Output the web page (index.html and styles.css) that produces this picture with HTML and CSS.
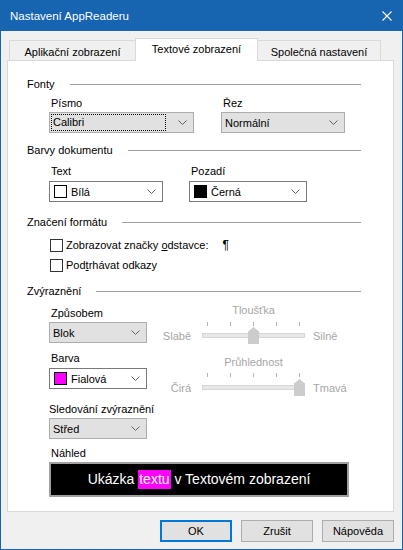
FILE: index.html
```html
<!DOCTYPE html>
<html lang="cs">
<head>
  <meta charset="UTF-8">
  <title>Nastavení AppReaderu</title>
  <link rel="stylesheet" href="styles.css">
</head>
<body>
  <div class="window">
    <div class="titlebar">
      <span class="title">Nastavení AppReaderu</span>
      <svg class="close" width="10" height="10" viewBox="0 0 10 10"><path d="M0.5 0.5 L9.5 9.5 M9.5 0.5 L0.5 9.5" stroke="#fff" stroke-width="1.1"/></svg>
    </div>

    <div class="content">
      <div class="tabs">
        <div class="tab first">Aplikační zobrazení</div>
        <div class="tab active">Textové zobrazení</div>
        <div class="tab">Společná nastavení</div>
      </div>

      <div class="panel">
        <div class="group-title"><span>Fonty</span><div class="line"></div></div>
        <div class="row fonts">
          <div class="field w-font">
            <div class="label">Písmo</div>
            <div class="combo grey">
              <div class="focus-rect">Calibri</div>
              <svg class="chev" width="9" height="5" viewBox="0 0 9 5"><path d="M0.5 0.5 L4.5 4.5 L8.5 0.5" fill="none" stroke="#606060"/></svg>
            </div>
          </div>
          <div class="field w-style">
            <div class="label">Řez</div>
            <div class="combo grey">
              <span class="value">Normální</span>
              <svg class="chev" width="9" height="5" viewBox="0 0 9 5"><path d="M0.5 0.5 L4.5 4.5 L8.5 0.5" fill="none" stroke="#606060"/></svg>
            </div>
          </div>
        </div>

        <div class="group-title gap-colors"><span>Barvy dokumentu</span><div class="line"></div></div>
        <div class="row colors">
          <div class="field w-text">
            <div class="label">Text</div>
            <div class="combo white">
              <span class="swatch white-sw"></span><span class="value">Bílá</span>
              <svg class="chev" width="9" height="5" viewBox="0 0 9 5"><path d="M0.5 0.5 L4.5 4.5 L8.5 0.5" fill="none" stroke="#606060"/></svg>
            </div>
          </div>
          <div class="field w-bg">
            <div class="label">Pozadí</div>
            <div class="combo white">
              <span class="swatch black-sw"></span><span class="value">Černá</span>
              <svg class="chev" width="9" height="5" viewBox="0 0 9 5"><path d="M0.5 0.5 L4.5 4.5 L8.5 0.5" fill="none" stroke="#606060"/></svg>
            </div>
          </div>
        </div>

        <div class="group-title gap-format"><span>Značení formátu</span><div class="line"></div></div>
        <div class="check first-check">
          <span class="box"></span>
          <span>Zobrazovat značky <u>o</u>dstavce:</span>
          <span class="pilcrow">¶</span>
        </div>
        <div class="check second-check">
          <span class="box"></span>
          <span>Pod<u>t</u>rhávat odkazy</span>
        </div>

        <div class="group-title gap-highlight"><span>Zvýraznění</span><div class="line"></div></div>
        <div class="highlight">
          <div class="left-col">
            <div class="label l-mode">Způsobem</div>
            <div class="combo grey">
              <span class="value">Blok</span>
              <svg class="chev" width="9" height="5" viewBox="0 0 9 5"><path d="M0.5 0.5 L4.5 4.5 L8.5 0.5" fill="none" stroke="#606060"/></svg>
            </div>
            <div class="label l-color">Barva</div>
            <div class="combo white c-color">
              <span class="swatch magenta-sw"></span><span class="value">Fialová</span>
              <svg class="chev" width="9" height="5" viewBox="0 0 9 5"><path d="M0.5 0.5 L4.5 4.5 L8.5 0.5" fill="none" stroke="#606060"/></svg>
            </div>
            <div class="label l-follow">Sledování zvýraznění</div>
            <div class="combo grey">
              <span class="value">Střed</span>
              <svg class="chev" width="9" height="5" viewBox="0 0 9 5"><path d="M0.5 0.5 L4.5 4.5 L8.5 0.5" fill="none" stroke="#606060"/></svg>
            </div>
          </div>

          <div class="right-col">
            <div class="slider s-weight">
              <div class="slider-title">Tloušťka</div>
              <div class="ticks"><i></i><i></i><i></i><i></i><i></i></div>
              <div class="slider-row">
                <span class="end start">Slabě</span>
                <div class="track">
                  <div class="rail"></div>
                  <svg class="thumb" style="left: 46px" width="11" height="17" viewBox="0 0 11 17"><path d="M0 4.5 L5.5 0 L11 4.5 V17 H0 Z" fill="#cccccc"/></svg>
                </div>
                <span class="end">Silně</span>
              </div>
            </div>
            <div class="slider s-opacity">
              <div class="slider-title">Průhlednost</div>
              <div class="ticks"><i></i><i></i><i></i><i></i><i></i></div>
              <div class="slider-row">
                <span class="end start">Čirá</span>
                <div class="track">
                  <div class="rail"></div>
                  <svg class="thumb" style="left: 92px" width="11" height="17" viewBox="0 0 11 17"><path d="M0 4.5 L5.5 0 L11 4.5 V17 H0 Z" fill="#cccccc"/></svg>
                </div>
                <span class="end">Tmavá</span>
              </div>
            </div>
          </div>
        </div>

        <div class="label l-preview">Náhled</div>
        <div class="preview">Ukázka <span class="mark">textu</span> v Textovém zobrazení</div>
      </div>

      <div class="buttons">
        <div class="btn default">OK</div>
        <div class="btn">Zrušit</div>
        <div class="btn">Nápověda</div>
      </div>
    </div>
  </div>
</body>
</html>
```

FILE: styles.css
```css
* {
  box-sizing: border-box;
  margin: 0;
  padding: 0;
}
body {
  font-family: "Liberation Sans", Arial, sans-serif;
  font-size: 11px;
  color: #000;
  background: #f0f0f0;
}
.window {
  width: 403px;
  height: 550px;
  border: 1px solid #1764b1;
  border-top: 0;
  background: #f0f0f0;
}
.titlebar {
  height: 31px;
  background: #1764b1;
  color: #fff;
  display: flex;
  align-items: center;
  justify-content: space-between;
  padding: 0 10px 0 9px;
  font-size: 11.5px;
}
.content {
  padding: 7px 8px 0 6px;
}

/* tabs */
.tabs {
  display: flex;
  align-items: flex-end;
  height: 23px;
  margin-left: 2px;
  margin-bottom: -1px;
  position: relative;
  z-index: 1;
}
.tab {
  height: 21px;
  border: 1px solid #d9d9d9;
  background: #f0f0f0;
  display: flex;
  align-items: center;
  justify-content: center;
  width: 123px;
  padding-top: 2px;
}
.tab.first {
  width: 126px;
  border-right: 0;
}
.tab.active {
  height: 23px;
  background: #fff;
  border-bottom: 0;
  padding-top: 0;
  padding-bottom: 2px;
}
.tab + .tab.active + .tab {
  border-left: 0;
}

/* panel */
.panel {
  height: 452px;
  background: #fff;
  border: 1px solid #d9d9d9;
  padding: 15px 32px 0 19px;
}
.group-title {
  display: flex;
  align-items: center;
  height: 16px;
  line-height: 16px;
}
.group-title .line {
  flex: 1;
  border-top: 1px solid #a0a0a0;
  margin-left: 15px;
}
.gap-colors { margin-top: 9px; }
.gap-format { margin-top: 12px; }
.gap-highlight { margin-top: 10px; }

.row {
  display: flex;
  padding-left: 22px;
}
.label {
  height: 16px;
  line-height: 16px;
  padding-left: 2px;
}
.fonts { gap: 27px; margin-top: 3px; }
.fonts .combo { margin-top: 1px; }
.w-font { width: 145px; }
.w-style { width: 124px; }
.colors { gap: 26px; margin-top: 5px; }
.colors .combo { margin-top: 2px; }
.w-text { width: 114px; }
.w-bg { width: 118px; }

/* combo boxes */
.combo {
  height: 21px;
  display: flex;
  align-items: center;
  border: 1px solid #adadad;
  padding-left: 3px;
  padding-right: 6px;
}
.combo.grey {
  background: #e1e1e1;
}
.combo.white {
  background: #fff;
  border-color: #7a7a7a;
}
.combo .value {
  flex: 1;
}
.focus-rect {
  flex: 1;
  height: 17px;
  line-height: 15px;
  border: 1px dotted #000;
  margin-left: -2px;
  margin-right: 12px;
  padding-left: 1px;
}
.chev {
  flex: none;
}
.swatch {
  width: 13px;
  height: 13px;
  border: 1px solid #000;
  margin-left: 1px;
  margin-right: 4px;
}
.white-sw { background: #fff; }
.black-sw { background: #000; }
.magenta-sw { background: #ff00ff; }

/* checkboxes */
.check {
  display: flex;
  align-items: center;
  height: 16px;
  padding-left: 23px;
}
.first-check { margin-top: 7px; }
.second-check { margin-top: 4px; }
.check .box {
  width: 13px;
  height: 13px;
  border: 1px solid #333;
  background: #fff;
  margin-right: 3px;
}
.pilcrow {
  margin-left: 14px;
  font-size: 12px;
}

/* highlight group */
.highlight {
  display: grid;
  grid-template-columns: 98px 1fr;
  column-gap: 8px;
  padding-left: 22px;
}
.left-col .combo {
  margin-top: 1px;
}
.l-mode { margin-top: 6px; }
.l-color { margin-top: 7px; }
.left-col .c-color { margin-top: 2px; }
.l-follow {
  margin-top: 12px;
  padding-left: 0;
  white-space: nowrap;
}

.slider {
  color: #a6a6a6;
}
.slider-title {
  height: 16px;
  line-height: 16px;
  width: 103px;
  margin-left: 47px;
  text-align: center;
}
.ticks {
  display: flex;
  justify-content: space-between;
  width: 103px;
  height: 4px;
  margin-left: 47px;
  padding: 0 5px;
}
.ticks i {
  width: 1px;
  height: 4px;
  background: #b4b4b4;
}
.slider-row {
  display: flex;
  align-items: center;
  height: 17px;
}
.end.start {
  width: 36px;
  text-align: right;
  margin-right: 11px;
}
.track {
  width: 103px;
  height: 17px;
  position: relative;
  margin-right: 8px;
}
.rail {
  margin-top: 6px;
  height: 5px;
  background: #e7e7e7;
  border: 1px solid #d6d6d6;
}
.thumb {
  position: absolute;
  top: 0;
}
.s-weight { margin-top: 3px; }
.s-weight .ticks { margin-top: 4px; }
.s-weight .slider-row { margin-top: 1px; }
.s-opacity { margin-top: 10px; }
.s-opacity .ticks { margin-top: 3px; }
.s-opacity .slider-row { margin-top: 2px; }

.l-preview {
  margin-top: 6px;
  margin-left: 22px;
}
.preview {
  margin-top: 1px;
  margin-left: 22px;
  width: 300px;
  height: 35px;
  background: #000;
  border: 2px solid #a0a0a0;
  color: #fff;
  font-size: 14px;
  line-height: 31px;
  text-align: center;
}
.preview .mark {
  background: #ff00ff;
  display: inline-block;
  line-height: 19px;
  padding: 0 1px;
}

/* buttons */
.buttons {
  display: flex;
  justify-content: flex-end;
  gap: 9px;
  margin-top: 8px;
}
.btn {
  width: 72px;
  height: 22px;
  display: flex;
  align-items: center;
  justify-content: center;
  background: #e1e1e1;
  border: 1px solid #adadad;
}
.btn.default {
  border: 2px solid #0078d7;
}
```
